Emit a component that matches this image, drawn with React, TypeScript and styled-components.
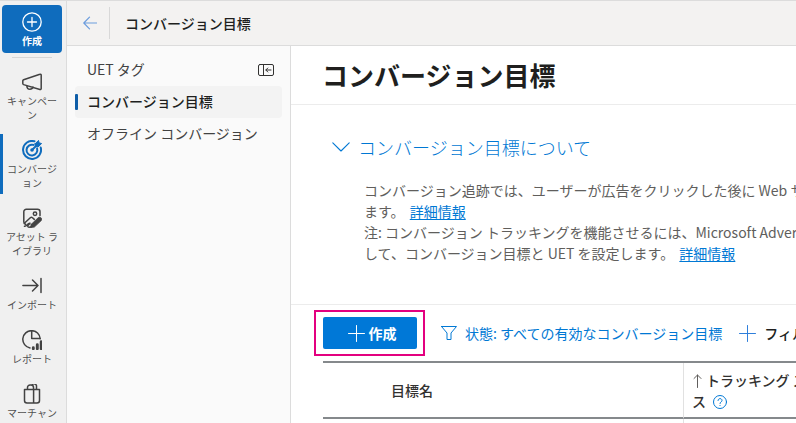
import React from "react";
import styled, { createGlobalStyle } from "styled-components";

const GlobalStyle = createGlobalStyle`
  *, *::before, *::after { box-sizing: border-box; }
  body {
    margin: 0;
    overflow: hidden;
    background: #fff;
    color: #323130;
    font: 14px/21px "Noto Sans CJK JP", sans-serif;
  }
  button { font: inherit; color: inherit; border: 0; background: none; padding: 0; cursor: pointer; }
  a { color: inherit; text-decoration: none; }
  h1, h2, p { margin: 0; }
  svg { display: block; flex: none; }
`;

const Shell = styled.div`
  display: flex;
  height: 100vh;
  border-top: 1px solid #dcdcdc;
  overflow: hidden;
`;

const Rail = styled.nav`
  flex: none;
  width: 67px;
  background: #f0f0f0;
  border-right: 1px solid #dcdcdc;
  overflow: hidden;
`;

const RailCreate = styled.button`
  && {
    display: flex;
    flex-direction: column;
    align-items: center;
    gap: 2px;
    width: 60px;
    height: 48px;
    margin: 4px 2px;
    padding-top: 7px;
    border-radius: 4px;
    background: #0f6cbd;
    color: #fff;
    font-size: 10px;
    font-weight: 700;
    line-height: 14px;
  }
`;

const RailDivider = styled.div`
  width: 40px;
  height: 1px;
  margin: 0 12px 8px;
  background: #d6d6d6;
`;

const RailItem = styled.a<{ $active?: boolean }>`
  display: flex;
  flex-direction: column;
  align-items: center;
  gap: 2px;
  width: 64px;
  padding: 6px 3px 12px;
  color: ${(p) => (p.$active ? "#0f6cbd" : "#424242")};
  background: ${(p) => (p.$active ? "linear-gradient(#0f6cbd, #0f6cbd) 0 0 / 3px 60px no-repeat" : "none")};
`;

const RailLabel = styled.span`
  width: 54px;
  color: #505050;
  font-size: 10px;
  line-height: 14px;
  text-align: center;
  line-break: anywhere;
`;

const Workspace = styled.div`
  display: flex;
  flex: 1;
  flex-direction: column;
  min-width: 0;
`;

const TopBar = styled.header`
  display: flex;
  flex: none;
  align-items: center;
  height: 45px;
  background: #f3f2f1;
  border-bottom: 1px solid #dcdcdc;
  color: #201f1e;
  font-weight: 500;
`;

const BackButton = styled.button`
  && {
    display: flex;
    align-items: center;
    height: 32px;
    padding: 0 12px 0 16px;
    border-right: 1px solid #d8d8d8;
    margin-right: 15px;
    color: #6c9ddd;
  }
`;

const Columns = styled.div`
  display: flex;
  flex: 1;
  min-height: 0;
`;

const SideNav = styled.nav`
  flex: none;
  width: 224px;
  padding: 8px 8px 0;
  background: #fafafa;
  border-right: 1px solid #dcdcdc;
`;

const SideRow = styled.div<{ $active?: boolean }>`
  display: flex;
  align-items: center;
  justify-content: space-between;
  height: 32px;
  padding-right: 8px;
  border-radius: 4px;
  background: ${(p) => (p.$active ? "#f3f3f3" : "transparent")};
  color: ${(p) => (p.$active ? "#201f1e" : "#424242")};
  font-weight: ${(p) => (p.$active ? 500 : 400)};

  &::before {
    content: "";
    width: 3px;
    height: 16px;
    margin-right: 9px;
    border-radius: 1px;
    background: ${(p) => (p.$active ? "#0f5ea8" : "transparent")};
  }
`;

const SideLink = styled.a`
  flex: 1;
  padding-bottom: 2px;
  white-space: nowrap;
`;

const Main = styled.main`
  flex: 1;
  min-width: 0;
  overflow: hidden;
  white-space: nowrap;
`;

const TitleBar = styled.div`
  padding: 8px 31px;
  border-bottom: 1px solid #ececec;
`;

const Title = styled.h1`
  color: #201f1e;
  font-size: 26px;
  font-weight: 700;
  line-height: 42px;
`;

const About = styled.section`
  padding: 29px 0 40px 41px;
  border-bottom: 1px solid #ececec;
`;

const AboutToggle = styled.button`
  && {
    display: flex;
    align-items: center;
    gap: 8px;
    color: #0078d4;
    font-size: 18px;
    font-weight: 300;
    line-height: 26px;
  }
`;

const AboutHeading = styled.h2`
  font: inherit;
`;

const AboutText = styled.p`
  padding: 20px 0 0 32px;
  color: #605e5c;
`;

const InfoLink = styled.a`
  && {
    margin-left: 2px;
    color: #0078d4;
    text-decoration: underline;
    text-underline-offset: 2px;
  }
`;

const Toolbar = styled.div`
  display: flex;
  align-items: center;
  padding: 5px 0 5px 23px;
`;

const Highlight = styled.div`
  padding: 5px 6px 5px 7px;
  border: 2px solid #e3007f;
`;

const CreateButton = styled.button`
  && {
    display: flex;
    align-items: center;
    justify-content: center;
    gap: 4px;
    width: 94px;
    height: 32px;
    padding-left: 4px;
    border-radius: 2px;
    background: #0078d7;
    color: #fff;
    font-weight: 700;
  }
`;

const FilterButton = styled.button<{ $strong?: boolean }>`
  && {
    display: flex;
    align-items: center;
    gap: 8px;
    margin-left: ${(p) => (p.$strong ? "17px" : "16px")};
    color: ${(p) => (p.$strong ? "#201f1e" : "#0078d4")};
    font-weight: ${(p) => (p.$strong ? 500 : 400)};
  }
`;

const TableArea = styled.div`
  padding-left: 32px;
`;

const Grid = styled.table`
  width: 100%;
  table-layout: fixed;
  border-collapse: separate;
  border-spacing: 0;
  border-top: 2px solid #85898c;
`;

const HeadCell = styled.th<{ $name?: boolean }>`
  width: ${(p) => (p.$name ? "360px" : "auto")};
  height: 56px;
  padding: ${(p) => (p.$name ? "0 0 0 68px" : "2px 0 0 8px")};
  border-bottom: 2px solid #85898c;
  border-left: ${(p) => (p.$name ? "0" : "1px solid #e1e1e1")};
  color: #323130;
  font-weight: 500;
  text-align: left;
`;

const BodyCell = styled.td<{ $name?: boolean }>`
  height: 40px;
  border-left: ${(p) => (p.$name ? "0" : "1px solid #e1e1e1")};
`;

const CellLine = styled.span`
  display: flex;
  align-items: center;
  gap: 3px;
`;

const HelpLine = styled(CellLine)`
  gap: 7px;
`;

type StrokeProps = { w?: number; h?: number; sw?: number; color?: string; children: React.ReactNode };

const Stroke = ({ w = 20, h = 20, sw = 1.4, color = "currentColor", children }: StrokeProps) => (
  <svg width={w} height={h} viewBox={`0 0 ${w} ${h}`} fill="none" stroke={color} strokeWidth={sw} strokeLinecap="round" strokeLinejoin="round" aria-hidden="true">
    {children}
  </svg>
);

const MegaphoneIcon = () => (
  <Stroke sw={1.5}>
    <path d="M17.900 2.300 1.600 7.700c-.5.2-.8.6-.8 1.100v2.700c0 .5.3.9.8 1.100l16.300 4.900c.7.200 1.300-.2 1.300-.9V3.200c0-.7-.6-1.200-1.300-.9ZM4.700 13.700c.2 2.100 1.400 3.500 3.200 3.500 1.600 0 2.700-.9 3.100-2.200" />
  </Stroke>
);

const TargetIcon = () => (
  <Stroke sw={2}>
    <path d="M12.500 1.300A9 9 0 1 0 18.700 7.500" />
    <path d="M11.500 4.900A5.400 5.400 0 1 0 15.100 8.500" />
    <circle cx="10" cy="10" r="1.800" fill="currentColor" stroke="none" />
    <path d="m10 10 5-5" />
    <path d="m13 3.900 3.500-3.500.6 2.500 2.500.6-3.500 3.500-2.600-.5-.5-2.600Z" fill="currentColor" strokeWidth="1" />
  </Stroke>
);

const AssetIcon = () => (
  <Stroke sw={1.5}>
    <path d="M3.500 16.300a2.500 2.500 0 0 1-1.700-2.500v-10A2.500 2.500 0 0 1 4.300 1.300h11.200A2.500 2.500 0 0 1 18 3.800v3.700" />
    <circle cx="13" cy="5.800" r="1.700" />
    <path d="m2.600 15 5.700-5.300c.7-.6 1.500-.6 2.200 0l1.800 1.700" />
    <path d="m9.300 16.300 7-6.700c2.100-1.300 4.300.9 3 2.900l-7 6.600-3.900.5.900-3.300Z" fill="currentColor" strokeWidth=".8" />
    <path d="M2.500 18.300c3-.5 3.200-3.800 5.500-3.100-.8 1.600-3 2.500-2 3.600.6.600 1.500.3 3 .2" />
  </Stroke>
);

const ImportIcon = () => (
  <Stroke sw={1.5}>
    <path d="M.9 9.500H16M10.500 4l5.500 5.500-5.500 5.500M19 2.500v14" />
  </Stroke>
);

const ReportIcon = () => (
  <Stroke sw={1.5}>
    <path d="M8 17.900A8.700 8.700 0 1 1 18.200 8.800" />
    <path d="M9.700.9v7.700h8.300" />
    <path d="M11.300 17.800v.9M15.300 14.700v4M19.200 11.700v7" strokeWidth="2.900" />
  </Stroke>
);

const MerchantIcon = () => (
  <Stroke sw={1.5}>
    <path d="M2.500 5.500h15v11a2.500 2.500 0 0 1-2.500 2.500H5a2.500 2.500 0 0 1-2.500-2.500v-11ZM11.600 5.500V19" />
    <path d="M5.500 5.300V3.500a2.500 2.500 0 0 1 2.500-2.500h1a2.500 2.500 0 0 1 2.500 2.500v1.800M10 1.200a2.400 2.400 0 0 1 4.500 1.500v2.600" />
  </Stroke>
);

const RAIL = [
  { label: "キャンペーン", Icon: MegaphoneIcon },
  { label: "コンバージョン", Icon: TargetIcon, active: true },
  { label: "アセット ライブラリ", Icon: AssetIcon },
  { label: "インポート", Icon: ImportIcon },
  { label: "レポート", Icon: ReportIcon },
  { label: "マーチャン", Icon: MerchantIcon },
];

export default function App() {
  return (
    <>
      <GlobalStyle />
      <Shell>
        <Rail>
          <RailCreate type="button">
            <Stroke sw={1.3}>
              <circle cx="10" cy="10" r="9.200" />
              <path d="M10 5.500v9M5.500 10h9" />
            </Stroke>
            作成
          </RailCreate>
          <RailDivider />
          {RAIL.map(({ label, Icon, active }) => (
            <RailItem key={label} href="#" $active={active}>
              <Icon />
              <RailLabel>{label}</RailLabel>
            </RailItem>
          ))}
        </Rail>
        <Workspace>
          <TopBar>
            <BackButton type="button" aria-label="戻る">
              <Stroke w={14} h={14} sw={1.2}>
                <path d="M13.500 7H1M6.500 1.200.8 7l5.700 5.800" />
              </Stroke>
            </BackButton>
            コンバージョン目標
          </TopBar>
          <Columns>
            <SideNav>
              <SideRow>
                <SideLink href="#">UET タグ</SideLink>
                <button type="button" aria-label="折りたたむ">
                  <Stroke w={16} h={12} sw={1} color="#323130">
                    <rect x=".5" y=".5" width="15" height="11" rx="1.500" />
                    <path d="M5.500.5v11M13 6H8M9.800 4 7.800 6l2 2" />
                  </Stroke>
                </button>
              </SideRow>
              <SideRow $active>
                <SideLink href="#" aria-current="page">コンバージョン目標</SideLink>
              </SideRow>
              <SideRow>
                <SideLink href="#">オフライン コンバージョン</SideLink>
              </SideRow>
            </SideNav>
            <Main>
              <TitleBar>
                <Title>コンバージョン目標</Title>
              </TitleBar>
              <About>
                <AboutToggle type="button" aria-expanded="true">
                  <Stroke w={18} h={10} sw={1.1}>
                    <path d="m.8.8 8.200 8.200L17.200.8" />
                  </Stroke>
                  <AboutHeading>コンバージョン目標について</AboutHeading>
                </AboutToggle>
                <AboutText>
                  コンバージョン追跡では、ユーザーが広告をクリックした後に Web サ<br />
                  ます。 <InfoLink href="#">詳細情報</InfoLink><br />
                  注: コンバージョン トラッキングを機能させるには、Microsoft Adver<br />
                  して、コンバージョン目標と UET を設定します。 <InfoLink href="#">詳細情報</InfoLink>
                </AboutText>
              </About>
              <Toolbar>
                <Highlight>
                  <CreateButton type="button">
                    <Stroke w={17} h={17} sw={1}>
                      <path d="M8.500.5v16M.5 8.500h16" />
                    </Stroke>
                    作成
                  </CreateButton>
                </Highlight>
                <FilterButton type="button">
                  <Stroke w={16} h={14} sw={1}>
                    <path d="M.5.5h15L10 7v6.500H6V7L.5.5Z" />
                  </Stroke>
                  状態: すべての有効なコンバージョン目標
                </FilterButton>
                <FilterButton type="button" $strong>
                  <Stroke w={17} h={17} sw={1} color="#2f7fdb">
                    <path d="M8.500.5v16M.5 8.500h16" />
                  </Stroke>
                  フィル
                </FilterButton>
              </Toolbar>
              <TableArea>
                <Grid>
                  <thead>
                    <tr>
                      <HeadCell $name>目標名</HeadCell>
                      <HeadCell>
                        <CellLine>
                          <Stroke w={11} h={14} sw={1} color="#605e5c">
                            <path d="M5.500 13.500V1M2 4.500 5.500 1 9 4.500" />
                          </Stroke>
                          トラッキング ス
                        </CellLine>
                        <HelpLine>
                          ス
                          <Stroke w={14} h={14} sw={1} color="#0078d4">
                            <circle cx="7" cy="7" r="6.500" />
                            <path d="M5 5.500c0-2.600 4-2.600 4 0C9 7 7 6.800 7 8.500M7 10.500v.1" />
                          </Stroke>
                        </HelpLine>
                      </HeadCell>
                    </tr>
                  </thead>
                  <tbody>
                    <tr>
                      <BodyCell $name />
                      <BodyCell />
                    </tr>
                  </tbody>
                </Grid>
              </TableArea>
            </Main>
          </Columns>
        </Workspace>
      </Shell>
    </>
  );
}
